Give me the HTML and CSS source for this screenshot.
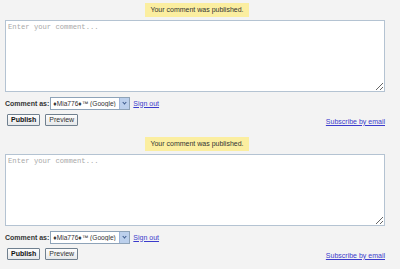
FILE: index.html
```html
<!DOCTYPE html>
<html>
<head>
    <title>Comments</title>
    <link rel="stylesheet" href="styles.css">
</head>
<body>
    <div class="comment-form">
        <div class="notice-row"><span class="notice">Your comment was published.</span></div>
        <textarea class="comment-box" placeholder="Enter your comment..."></textarea>
        <div class="identity-row">
            <label>Comment as:</label>
            <span class="select"><span class="select-text">&#9830;Mia776&#9830;&#8482; (Google)</span><span class="select-arrow"></span></span>
            <a href="#" class="link">Sign out</a>
        </div>
        <div class="actions-row">
            <button class="btn btn-primary">Publish</button>
            <button class="btn">Preview</button>
            <a href="#" class="link subscribe">Subscribe by email</a>
        </div>
    </div>

    <div class="comment-form">
        <div class="notice-row"><span class="notice">Your comment was published.</span></div>
        <textarea class="comment-box" placeholder="Enter your comment..."></textarea>
        <div class="identity-row">
            <label>Comment as:</label>
            <span class="select"><span class="select-text">&#9830;Mia776&#9830;&#8482; (Google)</span><span class="select-arrow"></span></span>
            <a href="#" class="link">Sign out</a>
        </div>
        <div class="actions-row">
            <button class="btn btn-primary">Publish</button>
            <button class="btn">Preview</button>
            <a href="#" class="link subscribe">Subscribe by email</a>
        </div>
    </div>
</body>
</html>
```

FILE: styles.css
```css
body {
    font-family: "Liberation Sans", Arial, sans-serif;
    font-size: 7px;
    margin: 0;
    padding: 3px 15px 0 5px;
    background-color: #f3f3f3;
    color: #222;
}
.comment-form {
    height: 134px;
}
.notice-row {
    text-align: center;
    height: 17px;
    padding-left: 4px;
}
.notice {
    display: inline-block;
    background: #fbeea0;
    color: #333;
    padding: 0 5px;
    line-height: 14px;
}
.comment-box {
    display: block;
    box-sizing: border-box;
    width: 380px;
    height: 72px;
    margin: 0;
    padding: 2px;
    border: 1px solid #b4c3d2;
    background: #fff;
    font-family: "Liberation Mono", "Courier New", monospace;
    font-size: 7.2px;
}
.comment-box::placeholder {
    color: #a8a8a8;
}
.identity-row {
    display: flex;
    align-items: center;
    margin-top: 5px;
    height: 12px;
}
.identity-row label {
    font-weight: bold;
    color: #333;
    margin-right: 1px;
}
.select {
    display: inline-flex;
    align-items: center;
    height: 11px;
    width: 78px;
    border: 1px solid #8ea3b8;
    background: #fff;
    margin-right: 3px;
}
.select-text {
    flex: 1;
    padding-left: 2px;
    font-size: 6.6px;
    color: #333;
    white-space: nowrap;
    overflow: hidden;
}
.select-arrow {
    width: 9px;
    height: 11px;
    background: #bcd0ec;
    border-left: 1px solid #9cb4d8;
    position: relative;
}
.select-arrow::after {
    content: "";
    position: absolute;
    left: 3px;
    top: 3px;
    width: 2px;
    height: 2px;
    border-right: 1px solid #3c5a8c;
    border-bottom: 1px solid #3c5a8c;
    transform: rotate(45deg);
}
.link {
    color: #3b3bcc;
    text-decoration: underline;
}
.actions-row {
    display: flex;
    align-items: center;
    margin-top: 5px;
    padding-left: 2px;
}
.btn {
    font-family: "Liberation Sans", Arial, sans-serif;
    font-size: 7px;
    height: 12px;
    padding: 0 3px;
    margin: 0 5px 0 0;
    border: 1px solid #70808f;
    border-radius: 1px;
    background: linear-gradient(#fdfdfd, #e6e8ea);
    color: #333;
    line-height: 10px;
}
.btn-primary {
    font-weight: bold;
    color: #111;
}
.subscribe {
    margin-left: auto;
    margin-top: 2px;
}
```
